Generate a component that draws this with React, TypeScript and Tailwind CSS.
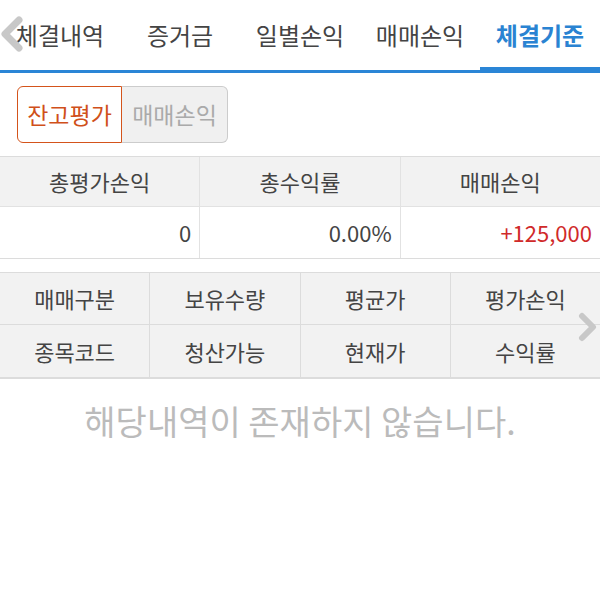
const tabs = ['체결내역', '증거금', '일별손익', '매매손익', '체결기준']

const summary = [
  { label: '총평가손익', value: '0', color: 'text-[#444444]' },
  { label: '총수익률', value: '0.00%', color: 'text-[#444444]' },
  { label: '매매손익', value: '+125,000', color: 'text-[#d02a2a]' },
]

const columns = [
  ['매매구분', '보유수량', '평균가', '평가손익'],
  ['종목코드', '청산가능', '현재가', '수익률'],
]

export default function App() {
  return (
    <div
      className="w-[600px] h-[600px] bg-white overflow-hidden text-[#444444]"
      style={{ fontFamily: '"Noto Sans CJK KR", "Noto Sans", sans-serif' }}
    >
      {/* Top tabs */}
      <div className="relative">
        <div className="flex h-[70px]">
          {tabs.map((t, i) => (
            <div
              key={t}
              className={`flex-1 flex items-center justify-center text-[24px] ${
                i === tabs.length - 1 ? 'font-bold text-[#2a83d2]' : 'text-[#444444]'
              }`}
            >
              {t}
            </div>
          ))}
        </div>
        <div className="flex h-[3px] bg-[#2a85d6]" />
        <div className="absolute right-0 bottom-0 w-[120px] h-[6px] bg-[#2a85d6]" />
        <svg className="absolute left-0 top-[16px]" width="24" height="36" viewBox="0 0 24 36">
          <path d="M19 4 L5 18 L19 32" fill="none" stroke="#c8c8c8" strokeWidth="7" strokeLinecap="round" strokeLinejoin="round" />
        </svg>
      </div>

      {/* Segment buttons */}
      <div className="flex px-[17px] pt-[13px]">
        <div className="w-[105px] h-[57px] flex items-center justify-center border border-[#d4541b] rounded-l-[6px] bg-white text-[#d0501a] text-[23px]">
          잔고평가
        </div>
        <div className="w-[106px] h-[57px] flex items-center justify-center border border-l-0 border-[#cccccc] rounded-r-[6px] bg-[#f0f0f0] text-[#aaaaaa] text-[23px]">
          매매손익
        </div>
      </div>

      {/* Summary table */}
      <div className="mt-[13px] border-t border-b border-[#dcdcdc]">
        <div className="flex h-[50px] bg-[#f2f2f2] border-b border-[#e2e2e2]">
          {summary.map((s, i) => (
            <div
              key={s.label}
              className={`flex-1 flex items-center justify-center text-[22px] ${i < 2 ? 'border-r border-[#e2e2e2]' : ''}`}
            >
              {s.label}
            </div>
          ))}
        </div>
        <div className="flex h-[51px] bg-white">
          {summary.map((s, i) => (
            <div
              key={s.label}
              className={`flex-1 flex items-center justify-end pr-[8px] text-[22px] ${s.color} ${i < 2 ? 'border-r border-[#e2e2e2]' : ''}`}
            >
              {s.value}
            </div>
          ))}
        </div>
      </div>

      {/* Column header table */}
      <div className="relative mt-[13px] border-t border-b-2 border-[#dcdcdc] bg-[#f2f2f2]">
        {columns.map((row, r) => (
          <div key={r} className={`flex h-[52px] ${r === 0 ? 'border-b border-[#dcdcdc]' : ''}`}>
            {row.map((c, i) => (
              <div
                key={c}
                className={`flex-1 flex items-center justify-center text-[22px] ${i < 3 ? 'border-r border-[#dcdcdc]' : ''}`}
              >
                {c}
              </div>
            ))}
          </div>
        ))}
        <svg className="absolute right-[2px] top-[39px]" width="20" height="30" viewBox="0 0 20 30">
          <path d="M4 4 L15 15 L4 26" fill="none" stroke="#c8c8c8" strokeWidth="6" strokeLinecap="round" strokeLinejoin="round" />
        </svg>
      </div>

      {/* Empty message */}
      <div className="pt-[16px] text-center text-[34px] text-[#bbbbbb]">해당내역이 존재하지 않습니다.</div>
    </div>
  )
}
